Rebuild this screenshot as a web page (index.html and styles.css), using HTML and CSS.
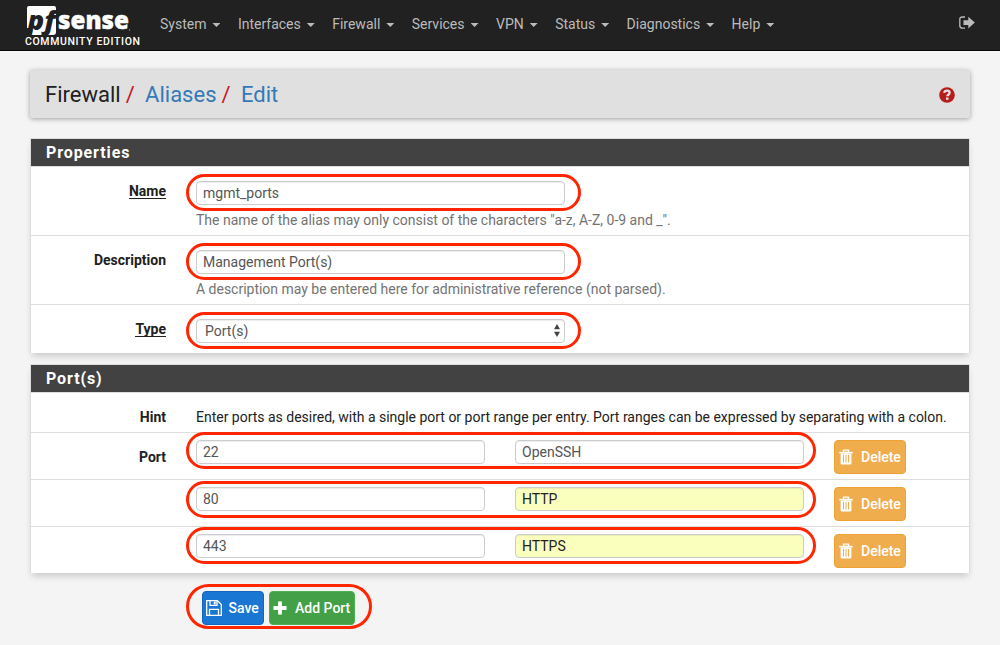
FILE: index.html
```html
<!DOCTYPE html>
<html lang="en">
<head>
<meta charset="utf-8">
<title>Firewall: Aliases: Edit</title>
<link rel="stylesheet" href="styles.css">
</head>
<body>
<nav class="navbar">
  <a class="brand">
    <svg class="logo" width="120" height="50" viewBox="0 0 120 50">
      <path d="M4 6h25q2 0 2 2v24q0 3-3 3H5L6.500 28H2V8q0-2 2-2z" fill="#fff"/>
      <text class="logo-pf" x="2.500" y="29.500" textLength="28" lengthAdjust="spacingAndGlyphs">pf</text>
      <text class="logo-sense" x="33" y="29" textLength="71" lengthAdjust="spacingAndGlyphs">sense</text>
      <circle cx="104.500" cy="30" r=".7" fill="#999"/>
      <text class="logo-edition" x="0" y="45" textLength="115">COMMUNITY EDITION</text>
    </svg>
  </a>
  <ul class="menu">
    <li>System<i class="caret"></i></li>
    <li>Interfaces<i class="caret"></i></li>
    <li>Firewall<i class="caret"></i></li>
    <li>Services<i class="caret"></i></li>
    <li>VPN<i class="caret"></i></li>
    <li>Status<i class="caret"></i></li>
    <li>Diagnostics<i class="caret"></i></li>
    <li>Help<i class="caret"></i></li>
  </ul>
  <svg class="logout" width="16" height="14" viewBox="0 0 16 14">
    <path d="M6 1H3.500Q.8 1 .8 3.500v6Q.8 12.200 3.500 12.200H6" fill="none" stroke="#bbb" stroke-width="1.300"/>
    <path d="M4.500 4.200h4.800V.7L15.800 6.600 9.300 12.500V9H4.500z" fill="#bbb"/>
  </svg>
</nav>
<main class="page">
  <header class="crumbs">
    <span>Firewall</span><b class="slash">/</b><a>Aliases</a><b class="slash">/</b><a>Edit</a>
    <svg class="help" width="16" height="16" viewBox="0 0 16 16">
      <circle cx="8" cy="8" r="7.800" fill="#b71c1c"/>
      <path d="M5.200 5.900C5.500 4.300 6.600 3.700 8 3.700c1.600 0 2.600.9 2.600 2.100 0 1.900-2.300 1.900-2.300 3.500" fill="none" stroke="#e0e0e0" stroke-width="2.300"/>
      <path d="M7 10.500h2.500v2.300H7z" fill="#e0e0e0"/>
    </svg>
  </header>

  <section class="panel">
    <h2>Properties</h2>
    <div class="row tall">
      <label><u>Name</u></label>
      <div class="field"><input class="wide" value="mgmt_ports"><p class="note">The name of the alias may only consist of the characters "a-z, A-Z, 0-9 and _".</p></div>
      <span class="ring"></span>
    </div>
    <div class="row tall">
      <label>Description</label>
      <div class="field"><input class="wide" value="Management Port(s)"><p class="note">A description may be entered here for administrative reference (not parsed).</p></div>
      <span class="ring"></span>
    </div>
    <div class="row type">
      <label><u>Type</u></label>
      <div class="field"><div class="select">
        <select><option>Port(s)</option></select>
        <svg class="updown" width="6" height="13" viewBox="0 0 6 13"><path d="M0 5.200 3 0l3 5.200zM0 7.700h6L3 12.900z" fill="#444"/></svg>
      </div></div>
      <span class="ring"></span>
    </div>
  </section>

  <section class="panel ports">
    <h2>Port(s)</h2>
    <div class="row hint">
      <label>Hint</label>
      <div class="field"><p class="help-text">Enter ports as desired, with a single port or port range per entry. Port ranges can be expressed by separating with a colon.</p></div>
    </div>
    <div class="row port">
      <label>Port</label>
      <div class="pair"><input value="22"><input value="OpenSSH"></div>
      <button class="btn delete"><svg width="14" height="16" viewBox="0 0 14 16"><use href="#trash"/></svg>Delete</button>
      <span class="ring long first"></span>
    </div>
    <div class="row port">
      <label></label>
      <div class="pair"><input value="80"><input class="auto" value="HTTP"></div>
      <button class="btn delete"><svg width="14" height="16" viewBox="0 0 14 16"><use href="#trash"/></svg>Delete</button>
      <span class="ring long second"></span>
    </div>
    <div class="row port">
      <label></label>
      <div class="pair"><input value="443"><input class="auto" value="HTTPS"></div>
      <button class="btn delete"><svg width="14" height="16" viewBox="0 0 14 16"><use href="#trash"/></svg>Delete</button>
      <span class="ring long third"></span>
    </div>
  </section>

  <div class="actions">
    <button class="btn save"><svg width="16" height="16" viewBox="0 0 16 16"><path d="M.7.700h10.800L15.300 4.500v10.800H.7zM4 .7v4.600h7V.7M3.500 15V9.300h9V15" fill="none" stroke="#fff" stroke-width="1.300"/><path d="M7.700 1.500h2v3h-2z" fill="#fff"/></svg>Save</button>
    <button class="btn add"><svg width="14" height="14" viewBox="0 0 14 14"><path d="M5.100.5h3.800v4.600h4.600v3.800H8.900v4.600H5.100V8.900H.5V5.100h4.600z" fill="#fff"/></svg>Add Port</button>
    <span class="ring buttons"></span>
  </div>
</main>
<svg class="defs" width="0" height="0">
  <symbol id="trash" viewBox="0 0 14 16">
    <path d="M4.500 3V1.200h5V3" fill="none" stroke="#fff" stroke-width="1.300"/>
    <path d="M.3 2.800h13.400v1.700H.3z" fill="#fff"/>
    <path d="M1.600 4.500h10.800v9.700q0 1.300-1.300 1.300H2.900q-1.300 0-1.300-1.300z" fill="#fff"/>
    <path d="M4.500 6v7.500M7 6v7.500M9.500 6v7.500" stroke="#f0ad4e" stroke-width="1"/>
  </symbol>
</svg>
</body>
</html>
```
FILE: styles.css
```css
* { box-sizing: border-box; }
body { margin: 0; height: 645px; overflow: hidden; background: #f4f4f4; color: #212121; font: 14px/20px Roboto, sans-serif; }
p, h2, ul { margin: 0; padding: 0; }
.defs { display: block; }

.navbar { display: flex; height: 51px; padding-left: 25px; background: #212121; border-bottom: 1px solid #080808; }
.logo { display: block; }
.logo-pf { font: italic 800 27px "Open Sans", sans-serif; fill: #212121; }
.logo-sense { font: 800 24px "Open Sans", sans-serif; fill: #fff; stroke: #fff; stroke-width: .4px; }
.logo-edition { font: 500 10.5px Roboto, sans-serif; fill: #fff; }
.menu { display: flex; gap: 17.45px; margin-left: 15px; list-style: none; color: #bbb; font-size: 14px; line-height: 48px; }
.menu li { display: flex; align-items: center; height: 48px; }
.caret { width: 8px; height: 4px; margin: 2px 0 0 6px; background: #bbb; clip-path: polygon(0 0, 100% 0, 50% 100%); }
.logout { margin: 16px 25px 0 auto; }

.page { padding: 19px 30px 0; }
.crumbs { display: flex; align-items: center; height: 48px; padding: 2px 15px 0; background: #e0e0e0; border-radius: 2px; box-shadow: 0 1px 5px rgba(0,0,0,.35); font-size: 22px; }
.crumbs a { color: #337ab7; }
.slash { color: #c9151e; font-weight: 400; margin: 0 10.4px 0 5px; }
.help { margin-left: auto; }

.panel { margin-top: 20px; background: #fff; border: 1px solid #ddd; border-bottom: 0; box-shadow: 0 5px 7px -2px rgba(0,0,0,.18); }
.panel.ports { margin-top: 11px; }
.panel h2 { height: 28px; padding-left: 15px; background: #424242; border-bottom: 1px solid #ddd; color: #fff; font-size: 16px; line-height: 27px; font-weight: 700; letter-spacing: .9px; }
.row { position: relative; display: flex; border-bottom: 1px solid #ddd; }
.row:last-child { border-bottom: 0; }
.row label { width: 135px; margin-right: 30px; padding-top: 14px; text-align: right; font-weight: 700; }
.row u { display: inline-block; line-height: 14px; text-decoration: none; border-bottom: 1px solid #212121; }
.tall { height: 69px; }
.type { height: 48px; }
.hint { height: 40px; }
.port { height: 47px; }
.port:last-child { height: 46px; }
.field { padding-top: 14px; }
input, select { display: block; width: 289px; height: 24px; padding: 0 6px; border: 1px solid #ccc; border-radius: 4px; background: #fff; box-shadow: inset 0 1px 1px rgba(0,0,0,.075); color: #555; font: 14px Roboto, sans-serif; outline: 0; }
.wide, .select { width: 369px; }
.auto { background: #faffbd; color: #222; }
.select { position: relative; }
select { width: 100%; padding: 0 8px; appearance: none; }
.updown { position: absolute; right: 5px; top: 5px; }
.note { margin-top: 5px; color: #737373; white-space: nowrap; }
.help-text { white-space: nowrap; }
.note, .help-text { letter-spacing: -.01px; }
.pair { display: flex; gap: 30px; padding-top: 7px; }
.btn { display: flex; align-items: center; height: 34px; padding: 0 4px; border: 1px solid; border-radius: 4px; color: #fff; font: 500 14px Roboto, sans-serif; white-space: nowrap; }
.btn svg { flex: none; }
.delete { width: 72px; margin: 7px 0 0 30px; gap: 8px; background: #f0ad4e; border-color: #eea236; }
.actions { position: relative; display: flex; gap: 5px; padding: 18px 0 0 172px; }
.save { width: 62px; padding: 0 3px; gap: 6.5px; background: #1976d2; border-color: #1565c0; }
.add { width: 86px; padding: 0 3px; gap: 8px; background: #43a047; border-color: #4caf50; }
.ring { position: absolute; left: 155px; top: 7px; width: 395px; height: 37px; border: 3px solid #ff2600; border-radius: 19px; pointer-events: none; }
.long { width: 630px; }
.first { top: -1px; }
.second { top: 1px; }
.third { top: 0; }
.buttons { left: 156px; top: 11px; width: 186px; height: 45px; border-radius: 23px; }
```
